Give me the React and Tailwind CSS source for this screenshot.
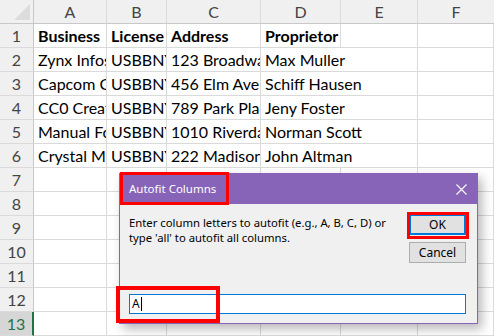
import React from "react";

const cols = [
  { l: "A", w: 73 },
  { l: "B", w: 60 },
  { l: "C", w: 94 },
  { l: "D", w: 80 },
  { l: "E", w: 77 },
  { l: "F", w: 76 },
];

const data = [
  ["Business", "License", "Address", "Proprietor"],
  ["Zynx Infosys", "USBBNY01", "123 Broadway St", "Max Muller"],
  ["Capcom Corp", "USBBNY02", "456 Elm Ave", "Schiff Hausen"],
  ["CC0 Creative", "USBBNY03", "789 Park Place", "Jeny Foster"],
  ["Manual Foods", "USBBNY04", "1010 Riverdale", "Norman Scott"],
  ["Crystal Media", "USBBNY05", "222 Madison Ave", "John Altman"],
];

const rows = Array.from({ length: 13 }, (_, i) => i + 1);

export default function App() {
  return (
    <div className="relative w-[494px] h-[336px] overflow-hidden bg-white" style={{ fontFamily: "Lato, 'Liberation Sans', sans-serif" }}>
      <div className="grid grid-cols-[34px_73px_60px_94px_80px_77px_76px] grid-rows-[repeat(14,24px)]">
        <div className="relative bg-[#f0f0f0] border-r border-b border-[#c8c8c8]">
          <svg className="absolute left-[14px] top-[4px]" width="16" height="16" viewBox="0 0 16 16">
            <polygon points="16,0 16,16 0,16" fill="#dcdcdc" />
          </svg>
        </div>
        {cols.map((c, i) => (
          <div
            key={c.l}
            className={`flex items-center justify-center bg-[#f0f0f0] border-b border-[#c8c8c8] text-[16px] text-[#444] ${i < cols.length - 1 ? "border-r border-r-[#dadada]" : ""}`}
          >
            {c.l}
          </div>
        ))}
        {rows.map((r) => {
          const sel = r === 13;
          const row = data[r - 1] || [];
          return (
            <React.Fragment key={r}>
              <div
                className={`flex items-center justify-center text-[16px] border-b border-b-[#dadada] ${
                  sel ? "bg-[#d6d6d6] text-[#217346] border-r-2 border-r-[#217346]" : "bg-[#f0f0f0] text-[#444] border-r border-r-[#c8c8c8]"
                }`}
              >
                {r}
              </div>
              {cols.map((c, ci) => {
                const spill = ci === 3 && r >= 2 && r <= 6;
                return (
                  <div
                    key={c.l}
                    className={`whitespace-nowrap border-b border-[#dadada] pl-[4px] text-[16px] leading-[23px] text-black ${
                      r === 1 ? "font-bold" : ""
                    } ${spill ? "overflow-visible border-r-0 relative z-10" : "overflow-hidden border-r"}`}
                  >
                    {row[ci] || ""}
                  </div>
                );
              })}
            </React.Fragment>
          );
        })}
      </div>

      {/* Dialog */}
      <div
        className="absolute left-[119px] top-[173px] w-[359px] h-[151px] z-20 flex flex-col border border-[#8764b8] bg-[#f0f0f0] shadow-[4px_5px_10px_rgba(0,0,0,0.28)]"
        style={{ fontFamily: "'Noto Sans', 'Open Sans', sans-serif" }}
      >
        <div className="h-[30px] flex items-center justify-between bg-[#8764b8] pl-[9px] pr-[10px] text-white text-[11.5px]">
          <span>Autofit Columns</span>
          <svg width="11" height="11" viewBox="0 0 11 11">
            <path d="M0.5 0.5 L10.5 10.5 M10.5 0.5 L0.5 10.5" stroke="white" strokeWidth="1.1" />
          </svg>
        </div>
        <div className="flex-1 flex flex-col pl-[9px] pr-[11px] pb-[9px]">
          <div className="flex justify-between pt-[10px]">
            <div className="text-[11.3px] leading-[15px] text-black whitespace-nowrap pt-[1px]">
              Enter column letters to autofit (e.g., A, B, C, D) or
              <br />
              type 'all' to autofit all columns.
            </div>
            <div className="flex flex-col gap-[7px] w-[57px]">
              <button className="h-[21px] bg-[#e1e1e1] border-2 border-[#0078d7] text-[12px] text-black leading-none">OK</button>
              <button className="h-[21px] bg-[#e1e1e1] border border-[#adadad] text-[12px] text-black leading-none">Cancel</button>
            </div>
          </div>
          <div className="mt-auto h-[20px] bg-white border border-[#0078d7] flex items-center pl-[2px] text-[12px] text-black">
            <span>A</span>
            <span className="w-px h-[14px] bg-black ml-px" />
          </div>
        </div>
      </div>

      {/* Red annotation boxes */}
      <div className="absolute z-30 left-[120px] top-[172px] w-[109px] h-[33px] border-[3px] border-[#ff0000]" />
      <div className="absolute z-30 left-[407px] top-[212px] w-[62px] h-[27px] border-[3px] border-[#ff0000]" />
      <div className="absolute z-30 left-[116px] top-[286px] w-[104px] h-[37px] border-[4px] border-[#ff0000]" />
    </div>
  );
}
